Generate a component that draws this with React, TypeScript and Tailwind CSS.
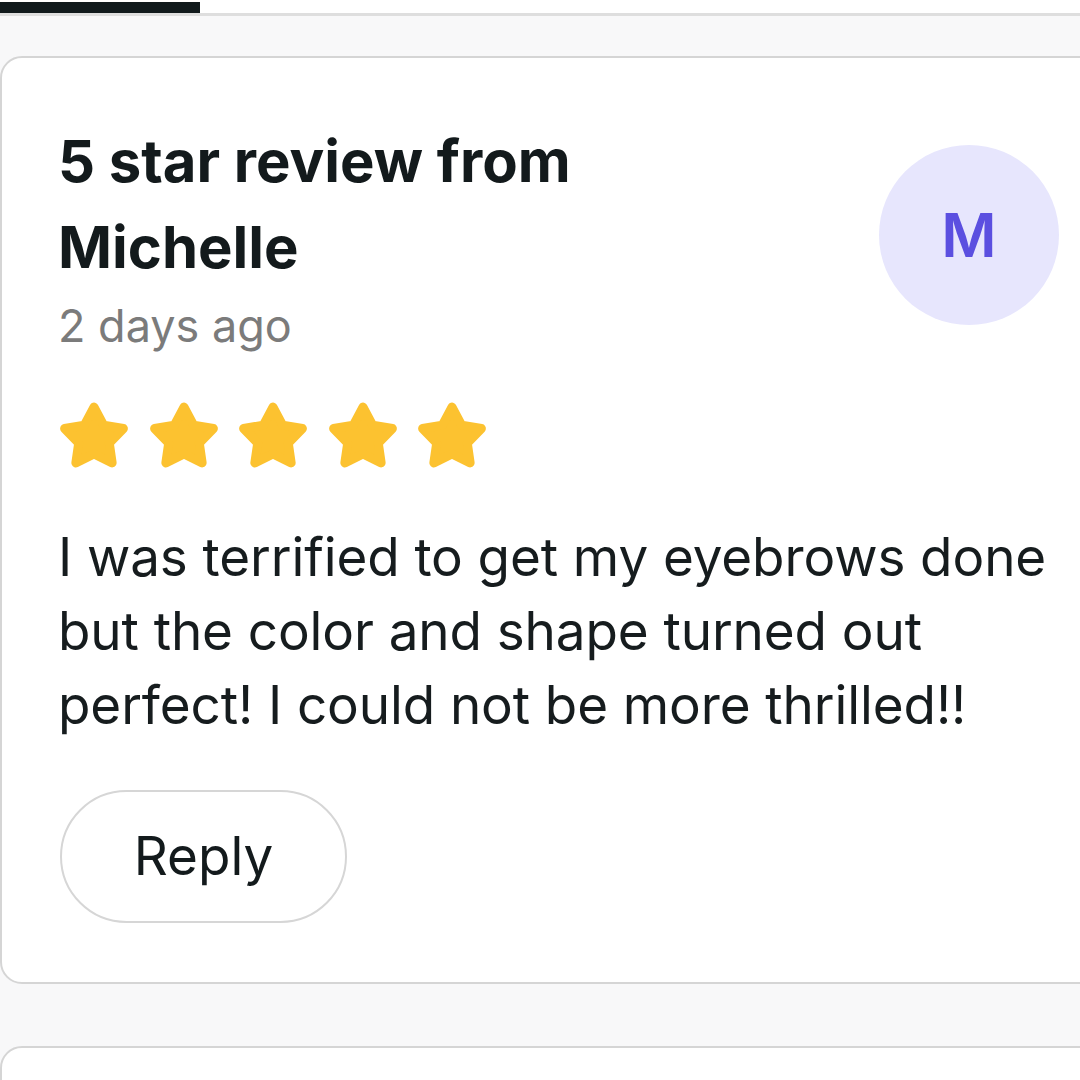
import React from 'react'

const review = {
  rating: 5,
  author: 'Michelle',
  when: '2 days ago',
  body: 'I was terrified to get my eyebrows done but the color and shape turned out perfect! I could not be more thrilled!!',
}

function Star() {
  return (
    <svg viewBox="0 0 24 24" className="h-[72px] w-[72px] shrink-0">
      <path
        d="M12 2.7L15.2 8.7L21.8 9.85L17.1 14.7L18.05 21.3L12 18.35L5.95 21.3L6.9 14.7L2.2 9.85L8.8 8.7Z"
        fill="#fcc230"
        stroke="#fcc230"
        strokeWidth={3}
        strokeLinejoin="round"
      />
    </svg>
  )
}

function ReviewCard() {
  return (
    <div className="w-[1110px] rounded-[22px] border-2 border-[#d5d5d5] bg-white pl-[56px] pt-[60px] pb-[59px]">
      {/* Header */}
      <div className="flex items-start">
        <div className="w-[821px]">
          <h2 className="max-w-[560px] text-[58px] font-bold leading-[86px] text-[#131a1c]">
            5 star review from {review.author}
          </h2>
          <p className="mt-[6px] text-[45px] leading-[60px] text-[#7b7b7b]">{review.when}</p>
        </div>
        <div className="mt-[27px] flex h-[180px] w-[180px] shrink-0 items-center justify-center rounded-full bg-[#e7e6fd]">
          <span className="text-[60px] font-semibold leading-none text-[#5b4fe0]">M</span>
        </div>
      </div>

      {/* Stars */}
      <div className="mt-[43px] flex gap-[17.5px]">
        {Array.from({ length: review.rating }).map((_, i) => (
          <Star key={i} />
        ))}
      </div>

      {/* Body */}
      <p className="mt-[49px] w-[1010px] text-[53px] leading-[74px] tracking-[-0.1px] text-[#161c1e]">
        {review.body}
      </p>

      <button className="ml-[2px] mt-[48px] flex h-[133px] w-[287px] items-center justify-center rounded-full border-2 border-[#d6d6d6] bg-white text-[53px] text-[#131a1c]">
        Reply
      </button>
    </div>
  )
}

export default function App() {
  return (
    <div
      className="h-[1080px] w-[1080px] overflow-hidden bg-[#f8f8f9]"
      style={{ fontFamily: 'Inter, "Noto Sans", sans-serif' }}
    >
      {/* Tab strip */}
      <div className="h-[13px] bg-white pt-[2px]">
        <div className="h-[11px] w-[200px] bg-[#111a1c]" />
      </div>
      <div className="h-[3px] bg-[#dedede]" />

      <div className="flex flex-col gap-[62px] pt-[40px]">
        <ReviewCard />
        <div className="h-[200px] w-[1110px] rounded-[22px] border-2 border-[#d5d5d5] bg-white" />
      </div>
    </div>
  )
}
